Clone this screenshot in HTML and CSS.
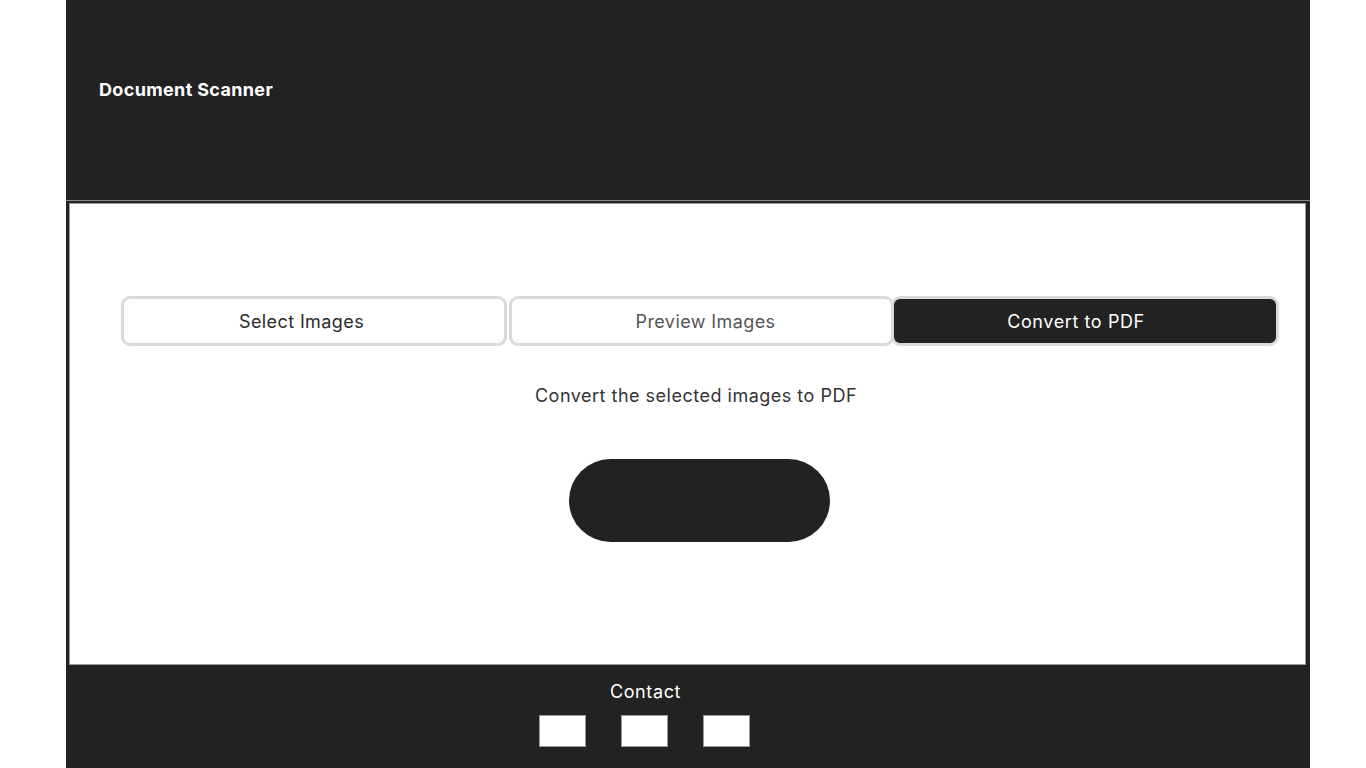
FILE: index.html
```html
<!DOCTYPE html>
<html>
<head>
<meta charset="utf-8">
<title>Document Scanner</title>
<link rel="stylesheet" href="styles.css">
</head>
<body>
<div class="app">
  <header class="header">
    <h1 class="title">Document Scanner</h1>
  </header>
  <main class="main">
    <section class="panel">
      <div class="content">
        <nav class="tabs">
          <button class="tab tab-select">Select Images</button>
          <button class="tab tab-preview">Preview Images</button>
          <button class="tab tab-convert active">Convert to PDF</button>
        </nav>
        <p class="desc">Convert the selected images to PDF</p>
        <button class="convert"></button>
      </div>
    </section>
  </main>
  <footer class="footer">
    <div class="contact">Contact</div>
    <div class="links">
      <span class="link-box"></span>
      <span class="link-box"></span>
      <span class="link-box"></span>
    </div>
  </footer>
</div>
</body>
</html>
```
FILE: styles.css
```css
html, body {
  margin: 0;
  padding: 0;
  background: #ffffff;
  font-family: Inter, "Noto Sans", sans-serif;
}
.app {
  width: 1244px;
  margin-left: 66px;
  height: 768px;
  background: #222222;
  display: flex;
  flex-direction: column;
}
.header {
  height: 201px;
  box-sizing: border-box;
  border-bottom: 1px solid #8a8a8a;
  display: flex;
  align-items: center;
  padding-left: 33px;
}
.title {
  margin: 0;
  color: #ffffff;
  font-size: 18px;
  font-weight: 700;
  letter-spacing: 0.35px;
  padding-bottom: 22px;
}
.main {
  padding: 2px 4px 0 3px;
}
.panel {
  background: #ffffff;
  border: 1px solid #9a9a9a;
  height: 462px;
  box-sizing: border-box;
}
.content {
  margin: 92px 28px 0 51px;
  display: flex;
  flex-direction: column;
  align-items: center;
}
.tabs {
  display: flex;
  width: 100%;
}
.tab {
  flex: 0 0 auto;
  box-sizing: border-box;
  height: 50px;
  margin: 0;
  border: 3px solid #dadada;
  border-radius: 9px;
  background: #ffffff;
  color: #2a2a2a;
  font-family: Inter, "Noto Sans", sans-serif;
  font-size: 18px;
  font-weight: 400;
  letter-spacing: 0.4px;
  padding: 0;
}
.tab-select {
  width: 386px;
  padding-right: 25px;
}
.tab-preview {
  width: 385px;
  margin-left: 2px;
  color: #555555;
  padding-left: 8px;
}
.tab.active {
  width: 388px;
  margin-left: -3px;
  background: #222222;
  color: #ffffff;
  padding-right: 18px;
  letter-spacing: 0.6px;
}
.desc {
  margin: 37px 0 0 0;
  padding-right: 6px;
  color: #333333;
  font-size: 18px;
  line-height: 26px;
  letter-spacing: 0.5px;
}
.convert {
  margin-top: 50px;
  width: 261px;
  height: 83px;
  border: none;
  border-radius: 42px;
  background: #222222;
}
.footer {
  flex: 1;
  display: flex;
  flex-direction: column;
  align-items: center;
  padding-right: 88px;
}
.contact {
  margin-top: 16px;
  padding-left: 3px;
  color: #ffffff;
  font-size: 18px;
  line-height: 22px;
  letter-spacing: 0.6px;
}
.links {
  margin-top: 12px;
  display: flex;
  gap: 35px;
}
.link-box {
  width: 47px;
  height: 32px;
  background: #ffffff;
  border: 1px solid #9a9a9a;
  box-sizing: border-box;
  display: block;
}
```
